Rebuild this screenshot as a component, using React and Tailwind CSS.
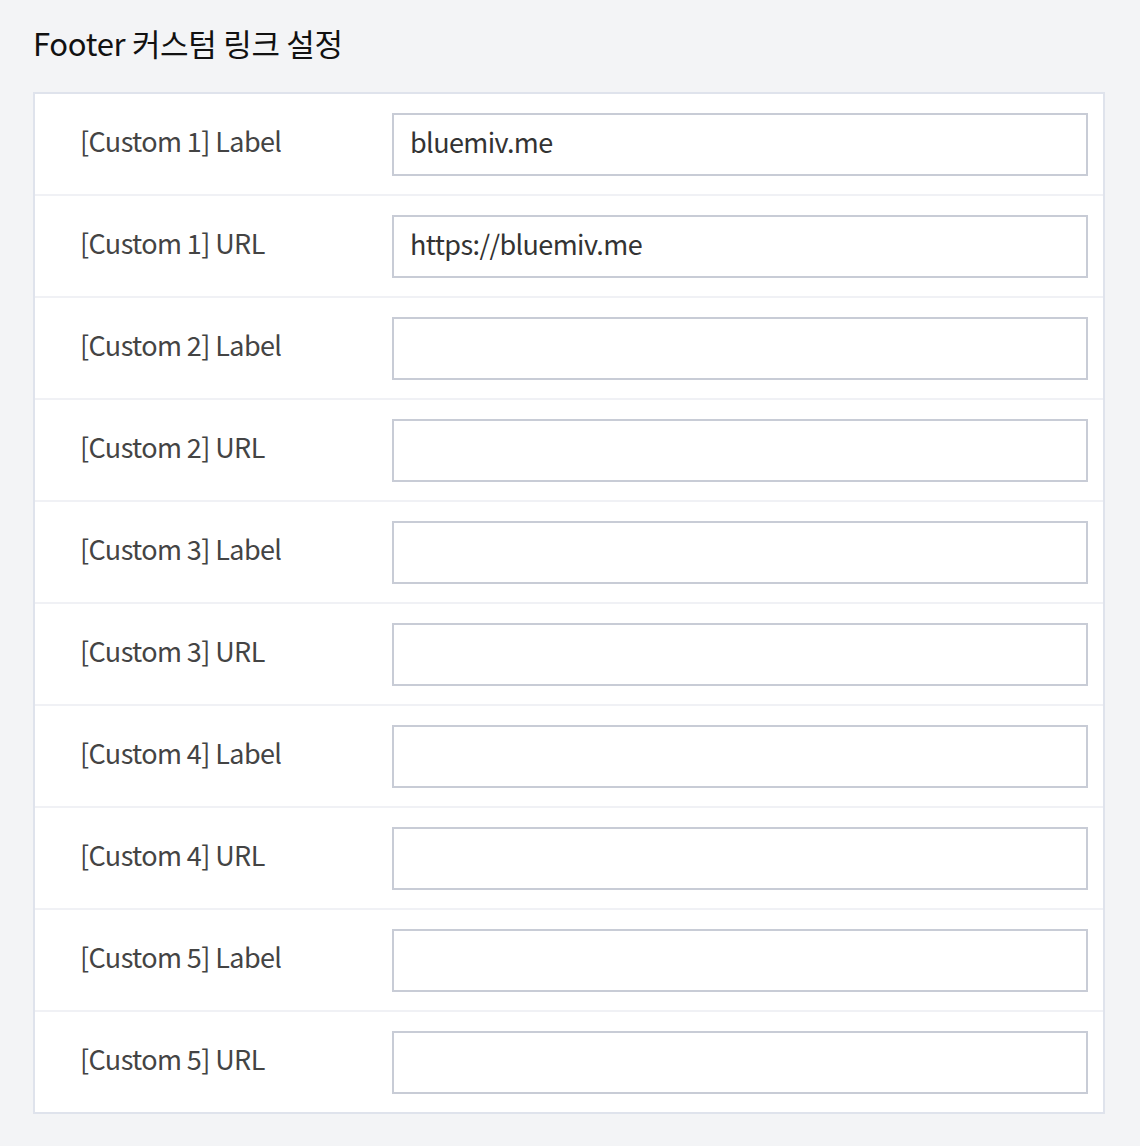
const rows = [
  { label: "[Custom 1] Label", value: "bluemiv.me" },
  { label: "[Custom 1] URL", value: "https://bluemiv.me" },
  { label: "[Custom 2] Label", value: "" },
  { label: "[Custom 2] URL", value: "" },
  { label: "[Custom 3] Label", value: "" },
  { label: "[Custom 3] URL", value: "" },
  { label: "[Custom 4] Label", value: "" },
  { label: "[Custom 4] URL", value: "" },
  { label: "[Custom 5] Label", value: "" },
  { label: "[Custom 5] URL", value: "" },
];

export default function App() {
  return (
    <div
      className="min-h-[1146px] bg-[#f3f4f6] px-[33px] pt-[21px] pb-[33px]"
      style={{ fontFamily: '"Noto Sans CJK KR", "Noto Sans", sans-serif' }}
    >
      {/* Title */}
      <h2 className="text-[31px] leading-[44px] text-[#111] tracking-[-0.3px]">
        Footer 커스텀 링크 설정
      </h2>

      {/* Settings card */}
      <div className="mt-[27px] w-[1072px] border-2 border-[#dfe3ec] bg-white">
        {rows.map((r, i) => (
          <div
            key={i}
            className={
              "flex items-center " +
              (i > 0 ? "h-[102px] border-t-2 border-[#f0f1f5]" : "h-[100px]")
            }
          >
            <div className="w-[357px] shrink-0 pl-[45px] pb-[5px] text-[27px] text-[#444] tracking-[-0.6px]">
              {r.label}
            </div>
            <div className="flex-1 pr-[15px]">
              <input
                type="text"
                defaultValue={r.value}
                className="h-[63px] w-full border-2 border-[#c8ccd6] bg-white px-[16px] pb-[5px] text-[27px] text-[#333] tracking-[-0.6px] outline-none"
              />
            </div>
          </div>
        ))}
      </div>
    </div>
  );
}
